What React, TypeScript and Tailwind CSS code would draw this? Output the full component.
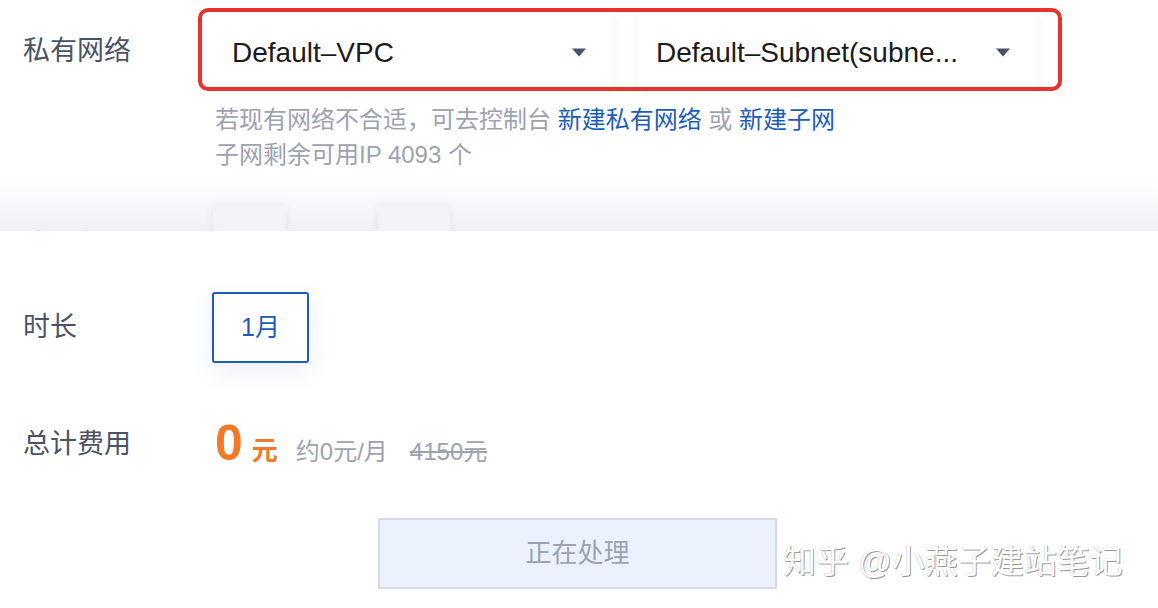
import React from 'react';

const font = 'font-["Liberation_Sans","Noto_Sans_CJK_SC",sans-serif]';

const Caret = () => (
  <svg width="16" height="9" viewBox="0 0 16 9" className="shrink-0">
    <path d="M1 0.5 H15 L8 8.5 Z" fill="#4a5366" />
  </svg>
);

const SelectBox: React.FC<{ value: string; className: string }> = ({ value, className }) => (
  <div
    className={`${className} h-[75px] bg-white flex items-center justify-between pr-[26px] shadow-[0_2px_10px_rgba(30,50,90,0.07)]`}
  >
    <span className="text-[28px] text-[#1b1b1b] whitespace-nowrap">{value}</span>
    <Caret />
  </div>
);

const App: React.FC = () => {
  return (
    <div className={`w-[1158px] h-[608px] bg-white overflow-hidden ${font}`}>
      {/* upper, faded section */}
      <div className="h-[231px] overflow-hidden bg-gradient-to-b from-white from-[78%] to-[#edf0f6]">
        <div className="flex items-start pt-[15px] pl-[23px]">
          <div className="w-[182px] h-[72px] flex items-center text-[27px] text-[#4a5366]">
            私有网络
          </div>
          <div className="relative flex gap-[25px]">
            <SelectBox value="Default–VPC" className="w-[408px] pl-[27px]" />
            <SelectBox value="Default–Subnet(subne..." className="w-[399px] pl-[18px]" />
            {/* annotation frame */}
            <div className="absolute -top-[7px] -left-[7px] -right-[25px] -bottom-[1px] border-[4px] border-[#e8322b] rounded-[10px] pointer-events-none" />
          </div>
        </div>

        <div className="pl-[215px] pt-[12px] text-[24px] leading-[35px] text-[#9ca3b0]">
          <p>
            若现有网络不合适，可去控制台 <span className="text-[#1d5cb9]">新建私有网络</span> 或{' '}
            <span className="text-[#1d5cb9]">新建子网</span>
          </p>
          <p>子网剩余可用IP 4093 个</p>
        </div>

        <div className="flex items-start pl-[23px] pt-[33px]">
          <div className="w-[190px] pt-[27px] text-[27px] leading-none text-[#8a94a6]">购买数量</div>
          <div className="flex gap-[92px]">
            <div className="w-[73px] h-[40px] bg-[#f1f3f8] shadow-[0_0_8px_rgba(60,80,140,0.08)]" />
            <div className="w-[72px] h-[40px] bg-[#f1f3f8] shadow-[0_0_8px_rgba(60,80,140,0.08)]" />
          </div>
        </div>
      </div>

      {/* duration */}
      <div className="flex items-center pl-[23px] pt-[61px]">
        <div className="w-[189px] text-[27px] text-[#4a5366]">时长</div>
        <div className="w-[97px] h-[71px] border-2 border-[#1d5cb9] rounded-[3px] flex items-center justify-center text-[25px] text-[#1d5cb9] shadow-[0_8px_24px_rgba(40,80,160,0.10)]">
          1月
        </div>
      </div>

      {/* total */}
      <div className="flex items-center pl-[23px] pt-[52px] h-[58px] box-content">
        <div className="w-[192px] text-[27px] text-[#4a5366]">总计费用</div>
        <div className="flex items-baseline">
          <span className="text-[50px] leading-none font-bold text-[#f07a28]">0</span>
          <span className="ml-[9px] text-[26px] font-bold text-[#f07a28]">元</span>
          <span className="ml-[18px] text-[24px] text-[#9ca3b0]">约0元/月</span>
          <span className="ml-[22px] text-[24px] text-[#9ca3b0] line-through">4150元</span>
        </div>
      </div>

      {/* submit + watermark */}
      <div className="flex items-center pl-[378px] pt-[45px]">
        <div className="w-[399px] h-[71px] bg-[#ecf2fd] border-2 border-[#d4dae3] flex items-center justify-center text-[26px] text-[#9ca3b0]">
          正在处理
        </div>
        <div className="ml-[6px] mt-[16px] text-[33px] text-white whitespace-nowrap [text-shadow:1px_1px_0_#9a9a9a,-0.5px_-0.5px_0_#c8c8c8]">
          知乎 @小燕子建站笔记
        </div>
      </div>
    </div>
  );
};

export default App;
